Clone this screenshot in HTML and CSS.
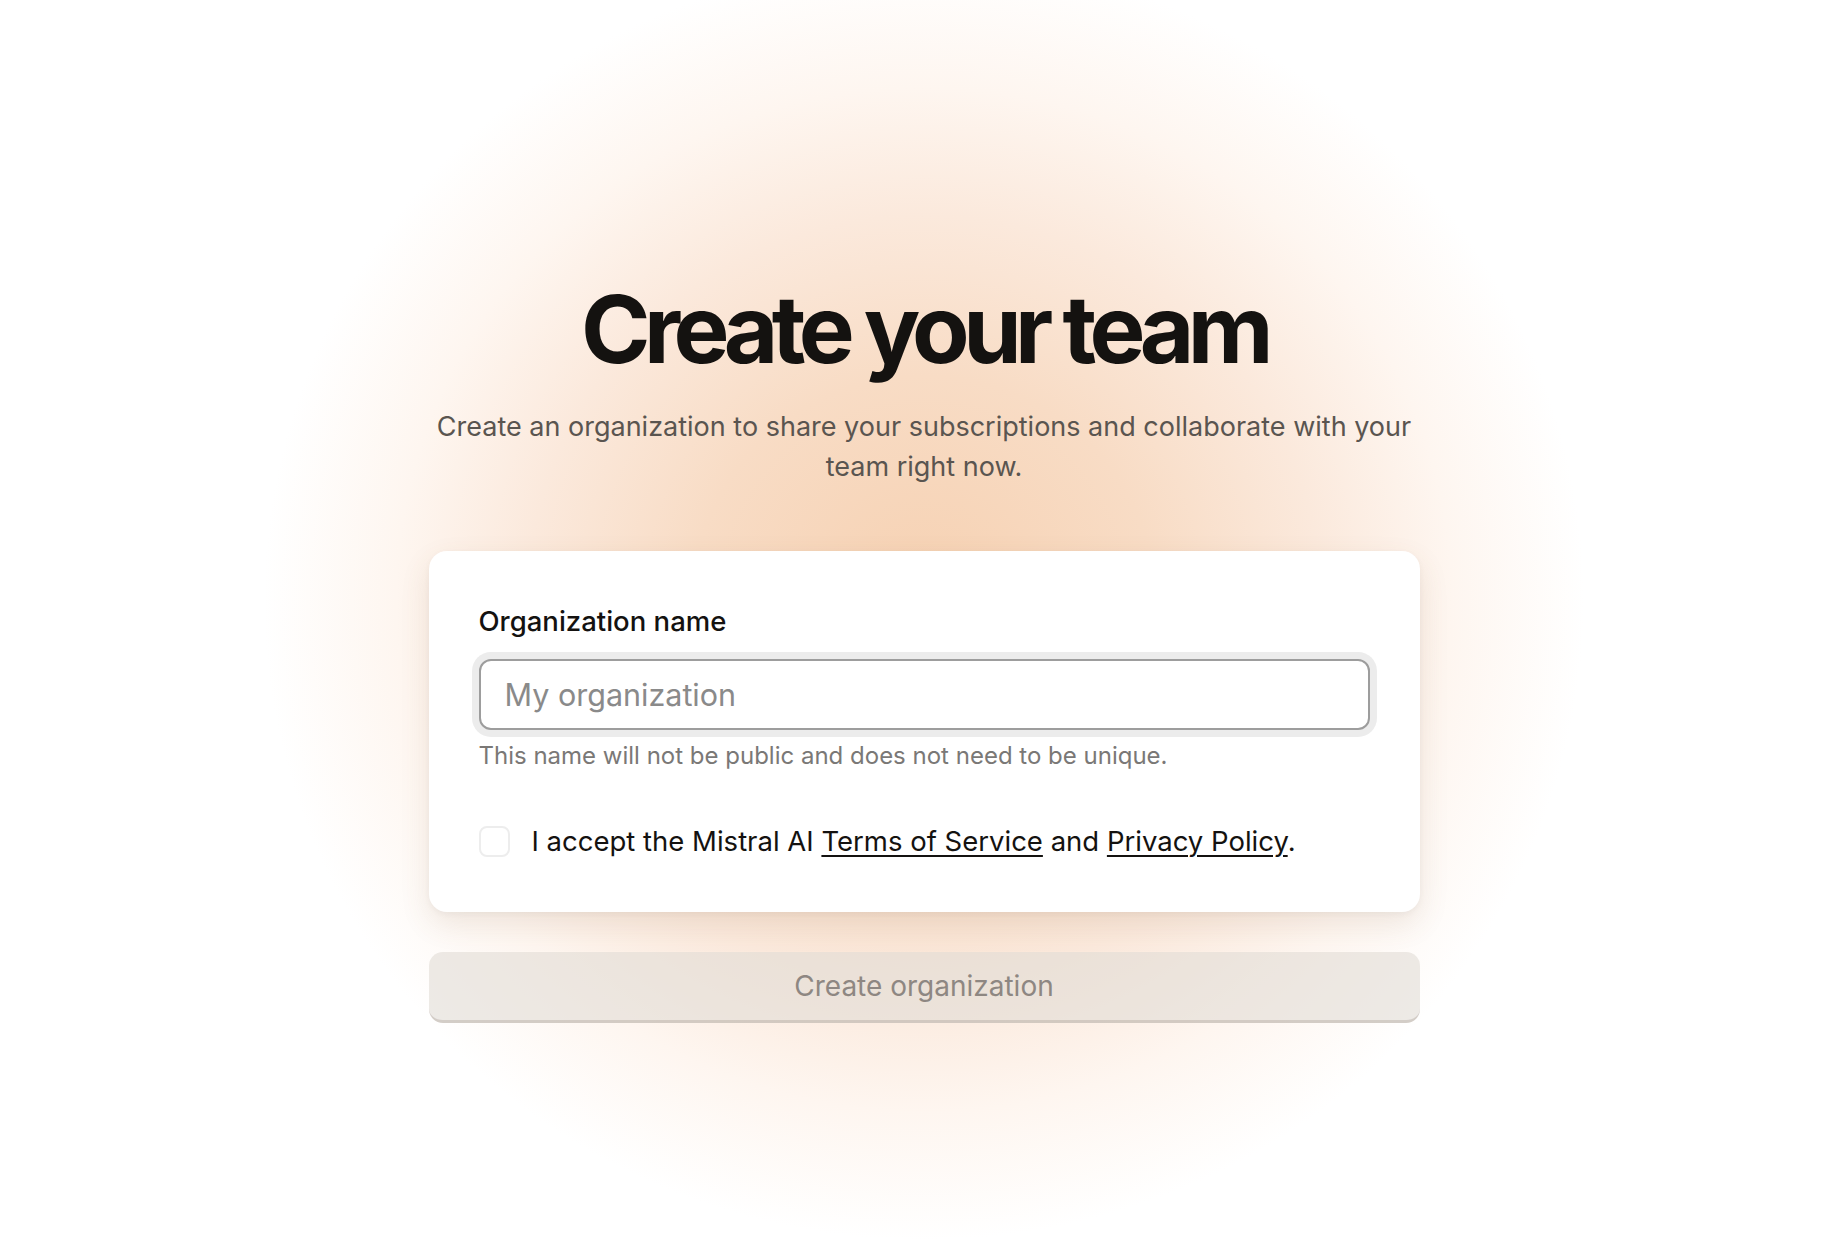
FILE: index.html
```html
<!DOCTYPE html>
<html lang="en">
<head>
<meta charset="utf-8">
<title>Create your team</title>
<link rel="stylesheet" href="styles.css">
</head>
<body>
<main class="page">
  <section class="content">
    <h1 class="title">Create your team</h1>
    <p class="subtitle">Create an organization to share your subscriptions and collaborate with your team right now.</p>
    <form class="card">
      <label class="label" for="org">Organization name</label>
      <input class="input" id="org" type="text" placeholder="My organization">
      <p class="hint">This name will not be public and does not need to be unique.</p>
      <div class="accept">
        <span class="checkbox"></span>
        <span class="accept-text">I accept the Mistral AI <a href="#">Terms of Service</a> and <a href="#">Privacy Policy</a>.</span>
      </div>
    </form>
    <button class="submit" type="button" disabled>Create organization</button>
  </section>
</main>
</body>
</html>
```
FILE: styles.css
```css
* { box-sizing: border-box; }
html, body { margin: 0; padding: 0; }
body {
  min-height: 1252px;
  font-family: Inter, "Noto Sans", sans-serif;
  color: #141210;
  background-color: #ffffff;
  background-image: radial-gradient(ellipse 660px 640px at 924px 600px, #f6d1b2 0%, #f8dcc5 35%, #fbe9dc 60%, #fef6f0 80%, rgba(255,255,255,0) 100%);
  background-repeat: no-repeat;
}
.page {
  padding-left: 18px;
  padding-top: 279px;
  display: flex;
  justify-content: center;
}
.content {
  width: 991px;
  display: flex;
  flex-direction: column;
  align-items: stretch;
}
.title {
  margin: 0;
  text-align: center;
  font-size: 94px;
  line-height: 100px;
  font-weight: 700;
  letter-spacing: -0.07em;
  color: #141210;
}
.subtitle {
  margin: 28px 0 0;
  text-align: center;
  font-size: 27px;
  line-height: 40px;
  color: #5a5550;
}
.card {
  margin: 64px 0 0;
  background: #ffffff;
  border-radius: 18px;
  padding: 52px 50px 55px;
  box-shadow: 0 12px 30px rgba(120, 90, 60, 0.12), 0 2px 6px rgba(0, 0, 0, 0.04);
  display: flex;
  flex-direction: column;
}
.label {
  font-size: 27.5px;
  line-height: 36px;
  font-weight: 500;
  color: #141210;
}
.input {
  margin-top: 20px;
  height: 71px;
  border: 2px solid #9d9d9d;
  border-radius: 12px;
  box-shadow: 0 0 0 7px #ececec;
  padding: 0 24px;
  font-family: inherit;
  font-size: 30.5px;
  color: #141210;
  background: #fff;
  outline: none;
}
.input::placeholder { color: #8a8a8a; }
.hint {
  margin: 11px 0 0;
  font-size: 24px;
  line-height: 30px;
  color: #7a7876;
}
.accept {
  margin-top: 54px;
  display: flex;
  align-items: center;
  gap: 22px;
}
.checkbox {
  width: 31px;
  height: 31px;
  border: 2px solid #ededed;
  border-radius: 8px;
  flex: none;
}
.accept-text {
  font-size: 27.5px;
  line-height: 32px;
  color: #141210;
}
.accept-text a {
  color: #141210;
  text-decoration: underline;
  text-underline-offset: 4px;
  text-decoration-thickness: 2px;
}
.submit {
  margin-top: 40px;
  height: 71px;
  border: none;
  border-bottom: 3px solid rgba(160, 150, 140, 0.35);
  border-radius: 14px;
  background: rgba(225, 220, 214, 0.6);
  font-family: inherit;
  font-size: 28px;
  color: #8e8782;
  cursor: not-allowed;
}
```
